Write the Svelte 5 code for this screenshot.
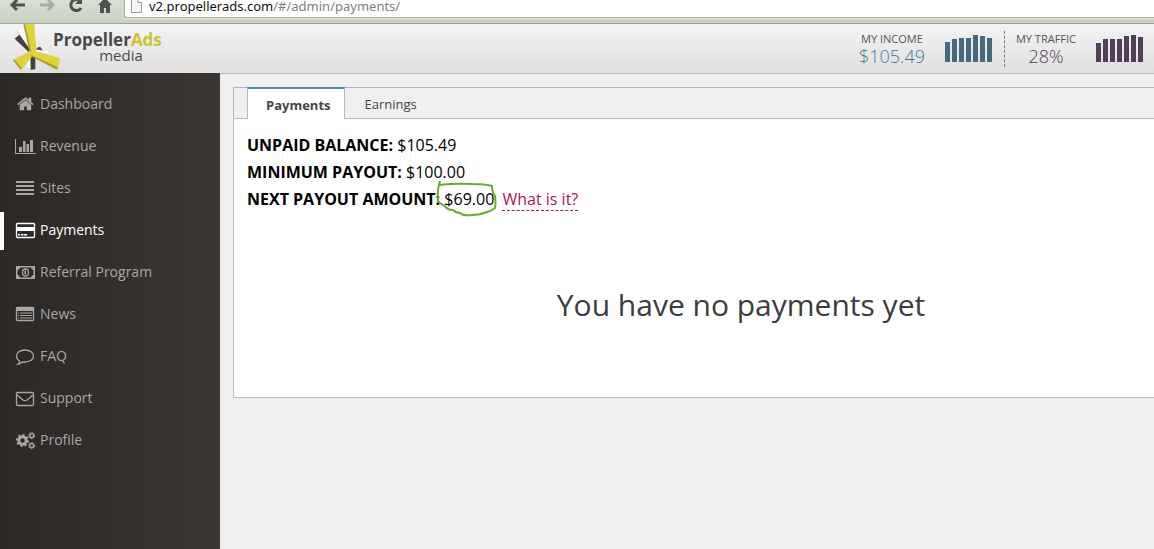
<script lang="ts">
  const menu = ['Dashboard', 'Revenue', 'Sites', 'Payments', 'Referral Program', 'News', 'FAQ', 'Support', 'Profile'];
  const tabs = ['Payments', 'Earnings'];

  const stats = [
    { kind: 'income', label: 'MY INCOME', value: '$105.49', bars: [20, 23, 24, 24, 27, 26, 24] },
    { kind: 'traffic', label: 'MY TRAFFIC', value: '28%', bars: [19, 23, 23, 23, 26, 27, 25] },
  ];

  const balances = [
    { label: 'UNPAID BALANCE:', value: '$105.49' },
    { label: 'MINIMUM PAYOUT:', value: '$100.00' },
  ];

  let page = $state('Payments');
  let tab = $state('Payments');
  let url = $state('v2.propellerads.com/#/admin/payments/');

  const host = $derived(url.split('/')[0]);
  const path = $derived(url.slice(host.length));
</script>

<div class="screen">
  <div class="browser">
    <button class="tool" aria-label="Back">
      <svg width="18" height="14" viewBox="0 0 18 14"><path d="M16 5H3M8 0L3 5l5 5" /></svg>
    </button>
    <button class="tool tool--off" aria-label="Forward" disabled>
      <svg width="18" height="14" viewBox="0 0 18 14"><path d="M2 5h13M10 0l5 5-5 5" /></svg>
    </button>
    <button class="tool" aria-label="Reload">
      <svg width="18" height="14" viewBox="0 0 18 14">
        <path d="M13 1A5.500 5.500 0 1 0 14 8" />
        <path class="solid" d="M15 -3v7H8z" />
      </svg>
    </button>
    <button class="tool" aria-label="Home">
      <svg width="18" height="14" viewBox="0 0 18 14">
        <path class="solid" d="M9 -2l7 7h-2v8h-4V8H8v5H4V5H2z" />
      </svg>
    </button>
    <div class="omnibox">
      <svg width="12" height="14" viewBox="0 0 12 14"><path d="M.5 -3V12.500h10V2.500H7V-2" /></svg>
      <a class="url" href="#/admin/payments/">{host}<span>{path}</span></a>
    </div>
  </div>

  <header class="header">
    <a class="logo" href="#/" aria-label="PropellerAds media">
      <svg width="49" height="48" viewBox="36 72 147 144">
        <path fill="#fff" d="M50 92l18-8 26 62-6 6z" />
        <path fill="#c9c9c9" d="M50 92l6 4 34 54-2 4z" />
        <path fill="#434343" d="M44 116l14-12 32 44-4 8z" />
        <path fill="#434343" d="M108 148q6-10 14-6l6 10z" />
        <path fill="#fff" d="M106 150l38 4v6l-34-4z" />
        <path fill="#fff" d="M80 180l11-12v38l-9-4z" />
        <path fill="#434343" d="M91 164l15 8v36l-14 1z" />
        <path fill="#ddd33a" d="M76 72h27l6 82-17 2z" />
        <path fill="#aaa126" d="M70 72h6l18 84-6-2z" />
        <path fill="#ddd33a" d="M42 178l48-24 10 12-34 40z" />
        <path fill="#aaa126" d="M39 181l3-4 24 28-4 5z" />
        <path fill="#ddd33a" d="M90 156l12-4 78 22-6 32-82-38z" />
        <path fill="#aaa126" d="M92 164l82 38-3 8-79-42z" />
      </svg>
      <span class="wordmark">
        <strong>Propeller<em>Ads</em></strong>
        <small>media</small>
      </span>
    </a>
    <div class="stats">
      {#each stats as stat}
        <div class="stat stat--{stat.kind}">
          <div class="stat__text">
            <span class="stat__label">{stat.label}</span>
            <span class="stat__value">{stat.value}</span>
          </div>
          <div class="bars">
            {#each stat.bars as height}
              <i style="height: {height}px"></i>
            {/each}
          </div>
        </div>
      {/each}
    </div>
  </header>

  <div class="body">
    <nav class="sidebar">
      {#each menu as item}
        <a href="#/" class:active={page === item} onclick={() => (page = item)}>
          <svg class="icon" width="22" height="18" viewBox="0 0 22 18">
            {#if item === 'Dashboard'}
              <g transform="translate(2.500 -1) scale(.01)">
                <path
                  d="M1472 992v480q0 26-19 45t-45 19h-384v-384h-256v384h-384q-26 0-45-19t-19-45v-480q0-1 .5-3t.5-3l575-474 575 474q1 2 1 6zm223-69l-62 74q-8 9-21 11h-3q-13 0-21-7l-692-577-692 577q-12 8-24 7-13-2-21-11l-62-74q-8-10-7-23.500t11-21.500l719-599q32-26 76-26t76 26l244 204v-195q0-14 9-23t23-9h192q14 0 23 9t9 23v408l219 182q10 8 11 21.500t-7 23.500z"
                />
              </g>
            {:else if item === 'Revenue'}
              <path d="M1 1h1v14h20v1H1zM5 9h3v5H5zM9 3h2.500v11H9zM12.500 6H15v8h-2.500zM16 2h3v12h-3z" />
            {:else if item === 'Sites'}
              <path d="M2 1h18v2H2zM2 5h18v2H2zM2 9h18v2H2zM2 13h18v2H2z" />
            {:else if item === 'Payments'}
              <rect class="line" x="2.500" y="1.500" width="18" height="14" rx="1" />
              <path d="M2 5h19v4H2zM4 12h2v1.500H4zM7 12h2v1.500H7zM9.500 12H13v1.500H9.500z" />
            {:else if item === 'Referral Program'}
              <path
                fill-rule="evenodd"
                d="M2 2h19v13H2zM6 3.500A3 3 0 0 1 3.500 6v5A3 3 0 0 1 6 13.500h11a3 3 0 0 1 2.500-2.500V6A3 3 0 0 1 17 3.500z"
              />
              <ellipse class="ring" cx="11.500" cy="8.500" rx="3" ry="3.500" />
              <path d="M10.500 6.500h1.500v4h-1.500z" />
            {:else if item === 'News'}
              <rect class="line" x="2.500" y="1.500" width="17" height="13" rx="1" />
              <path
                d="M2 1h18v4H2zM4 6.500h1v1H4zM6 6.500h12v1H6zM4 9h1v1H4zM6 9h12v1H6zM4 11.500h1v1H4zM6 11.500h12v1H6z"
              />
            {:else if item === 'FAQ'}
              <path
                class="line"
                d="M11 2c5 0 8.500 2.500 8.500 6s-3.500 6-8.500 6c-.8 0-1.600 0-2.400-.2C7.300 15.200 5.700 16 4 16.300c1-.9 1.600-2 1.700-3.300C3.600 11.800 2.500 10 2.500 8 2.500 4.500 6 2 11 2z"
              />
            {:else if item === 'Support'}
              <rect class="line" x="2.500" y="2.500" width="17" height="13" rx="1" />
              <path class="line" d="M3 5l6 5q2 1.400 4 0l6-5" />
            {:else}
              <circle class="gear" cx="8.500" cy="8.500" r="3.700" />
              <circle class="teeth" cx="8.500" cy="8.500" r="5.500" pathLength="16" />
              <circle class="gear gear--sm" cx="17.700" cy="3.600" r="2" />
              <circle class="teeth teeth--sm" cx="17.700" cy="3.600" r="2.900" pathLength="16" />
              <circle class="gear gear--sm" cx="17.700" cy="13.600" r="2" />
              <circle class="teeth teeth--sm" cx="17.700" cy="13.600" r="2.900" pathLength="16" />
            {/if}
          </svg>
          <span>{item}</span>
        </a>
      {/each}
    </nav>

    <main class="content">
      <section class="panel">
        <div class="tabs" role="tablist">
          {#each tabs as name}
            <button role="tab" class="tab" class:selected={tab === name} aria-selected={tab === name} onclick={() => (tab = name)}>
              {name}
            </button>
          {/each}
        </div>
        <div class="summary">
          {#each balances as row}
            <p><b>{row.label}</b> {row.value}</p>
          {/each}
          <p>
            <b>NEXT PAYOUT AMOUNT:</b>
            <span class="marked">
              $69.00
              <svg class="scribble" width="64" height="40" viewBox="0 0 64 40">
                <path
                  d="M4 1L3 5q16-2 34-1 12 0 19 2 0 6 3 10 1 7 0 12-5 4-11 5-5 2-12 2-9 1-12-2-4 0-7-3-6 0-8-4-5-2-7-5Q1 12 3 5"
                />
              </svg>
            </span>
            <a class="hint" href="#/admin/payments/">What is it?</a>
          </p>
        </div>
        <h1>You have no payments yet</h1>
      </section>
    </main>
  </div>
</div>

<style>
  :global(body) {
    margin: 0;
    overflow: hidden;
  }

  .screen {
    display: flex;
    flex-direction: column;
    min-height: 100vh;
    background: #f0f0f0;
    font-family: 'Open Sans', sans-serif;
  }

  button {
    padding: 0;
    border: none;
    background: none;
    font: inherit;
    cursor: pointer;
  }

  a {
    color: inherit;
    text-decoration: none;
  }

  /* browser toolbar */
  .browser {
    box-sizing: border-box;
    display: flex;
    align-items: flex-start;
    gap: 11px;
    height: 24px;
    padding-left: 9px;
    border-bottom: 1px solid #9da199;
    background: linear-gradient(#d8dfd3, #c8d1c0);
    overflow: hidden;
  }

  .tool {
    height: 14px;
  }

  .tool svg {
    display: block;
    fill: none;
    stroke: #505050;
    stroke-width: 3;
    overflow: visible;
  }

  .tool--off svg {
    stroke: #a9aea5;
  }

  .tool .solid {
    fill: #505050;
    stroke: none;
  }

  .omnibox {
    display: flex;
    flex: 1;
    gap: 6px;
    height: 17px;
    margin-left: -1px;
    padding-left: 6px;
    border-bottom: 1px solid #a5aea0;
    border-left: 1px solid #a5aea0;
    border-bottom-left-radius: 3px;
    background: #fff;
    box-shadow: 0 1px #e2e9dd;
  }

  .omnibox svg {
    fill: #f6f6f6;
    stroke: #999;
  }

  .url {
    color: #111;
    font: 13px/13px 'Noto Sans', sans-serif;
  }

  .url span {
    color: #808080;
  }

  /* header */
  .header {
    box-sizing: border-box;
    display: flex;
    align-items: flex-start;
    justify-content: space-between;
    height: 50px;
    padding: 0 11px 0 12px;
    border-bottom: 1px solid #bcbcbc;
    background: linear-gradient(#f4f4f4, #dfdfdf);
  }

  .logo {
    display: flex;
  }

  .wordmark {
    display: flex;
    flex-direction: column;
    margin-left: -8px;
    padding-top: 7px;
    color: #4a4a4a;
  }

  .wordmark strong {
    font-size: 17px;
    line-height: 18px;
  }

  .wordmark em {
    color: #c8c52f;
    font-style: normal;
  }

  .wordmark small {
    padding-right: 19px;
    font-size: 15px;
    line-height: 12px;
    text-align: right;
  }

  .stats {
    display: flex;
    padding-top: 7px;
  }

  .stat {
    display: flex;
    gap: 20px;
    height: 36px;
  }

  .stat + .stat {
    margin-left: 12px;
    padding-left: 11px;
    border-left: 1px dashed #777;
  }

  .stat__text {
    display: flex;
    flex-direction: column;
    align-items: center;
  }

  .stat__label {
    color: #555;
    font-size: 11px;
    line-height: 16px;
  }

  .stat__value {
    font-size: 18px;
    font-weight: 300;
    line-height: 18px;
  }

  .stat--income .stat__value {
    color: #3d7b9a;
  }

  .stat--traffic .stat__value {
    color: #52405a;
  }

  .bars {
    display: flex;
    align-items: flex-end;
    gap: 2px;
    height: 31px;
  }

  .bars i {
    width: 5px;
    background: #446a7b;
  }

  .stat--traffic .bars i {
    background: #52405a;
  }

  /* sidebar */
  .body {
    display: flex;
    flex: 1;
  }

  .sidebar {
    box-sizing: border-box;
    display: flex;
    flex-direction: column;
    flex: none;
    gap: 4px;
    width: 220px;
    margin-top: -1px;
    padding-top: 13px;
    background: linear-gradient(90deg, #2b2826, #3d3733);
  }

  .sidebar a {
    display: flex;
    align-items: center;
    gap: 4px;
    height: 38px;
    padding-left: 10px;
    border-left: 4px solid transparent;
    color: #a9a7a5;
    font-size: 14px;
    line-height: 20px;
  }

  .sidebar span {
    padding-bottom: 2px;
  }

  .sidebar a.active {
    border-color: #fff;
    color: #fff;
  }

  .icon {
    fill: currentColor;
  }

  .icon .line,
  .icon .ring,
  .icon .gear,
  .icon .teeth {
    fill: none;
    stroke: currentColor;
    stroke-width: 1.3;
  }

  .icon .gear {
    stroke-width: 3;
  }

  .icon .teeth {
    stroke-width: 2;
    stroke-dasharray: 1;
  }

  .icon .gear--sm {
    stroke-width: 1.4;
  }

  .icon .teeth--sm {
    stroke-width: 1.2;
  }

  /* content */
  .content {
    flex: 1;
    padding: 13px 0 0 13px;
  }

  .panel {
    border: 1px solid #b8b8b8;
    border-right: none;
    background: #fff;
  }

  .tabs {
    display: flex;
    height: 30px;
    padding-left: 13px;
    border-bottom: 1px solid #b8b8b8;
    background: #f0f0f0;
  }

  .tab {
    height: 30px;
    padding: 2px 20px 0;
    color: #444;
    font-size: 13px;
    line-height: 20px;
  }

  .tab.selected {
    height: 32px;
    margin-top: -1px;
    padding: 2px 13px 0 18px;
    border: 1px solid #b8b8b8;
    border-top: 2px solid #5384a0;
    border-bottom: none;
    background: #fff;
    font-weight: 700;
  }

  .summary {
    padding: 13px 13px 0;
    font-size: 16px;
    line-height: 27px;
  }

  .summary p {
    margin: 0;
  }

  .marked {
    position: relative;
  }

  .scribble {
    position: absolute;
    top: -8px;
    left: -8px;
    fill: none;
    stroke: #6aaa2a;
    stroke-width: 2;
    stroke-linejoin: round;
  }

  .hint {
    margin-left: 4px;
    border-bottom: 1px dashed #c4074f;
    color: #ad1450;
  }

  h1 {
    margin: 0;
    padding: 70px 0 70px 94px;
    color: #3c3c3c;
    font-size: 30px;
    font-weight: 400;
    line-height: 44px;
    text-align: center;
  }
</style>
